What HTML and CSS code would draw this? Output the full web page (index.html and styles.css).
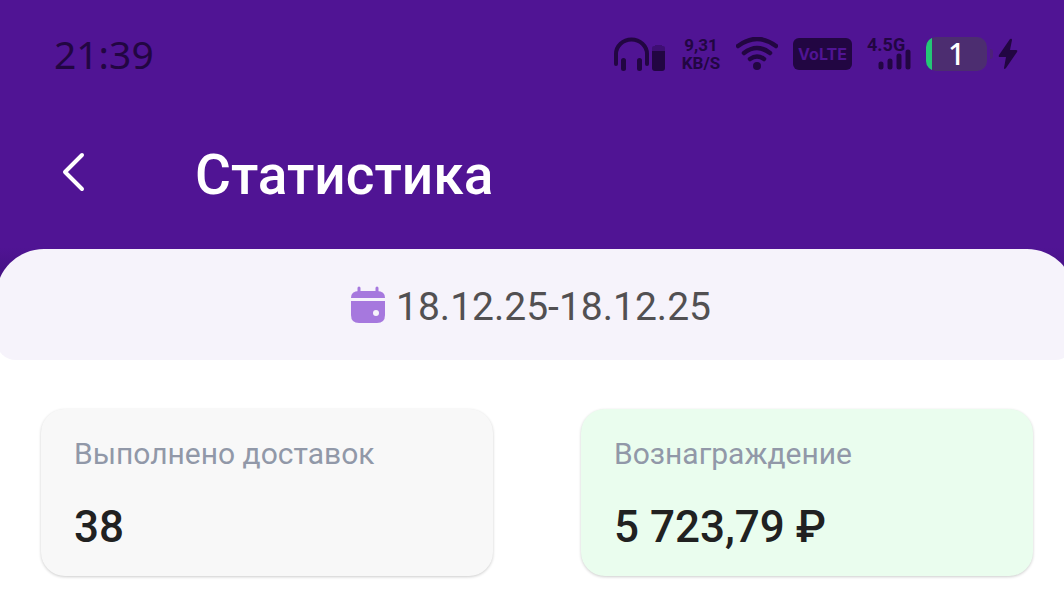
FILE: index.html
```
<!DOCTYPE html>
<html lang="ru">
	<head>
		<meta charset="UTF-8" />
		<meta name="viewport" content="width=device-width, initial-scale=1.0" />
		<title>Статистика</title>
		<link rel="stylesheet" href="styles.css">
	</head>
	<body>
		<header class="header">
			<div class="status-bar">
				<span class="clock">21:39</span>
				<div class="status-icons">
					<svg class="headphones" width="54" height="36" viewBox="0 0 54 36" aria-hidden="true">
						<path d="M4 28V18a15 14 0 0 1 31 0v10" fill="none" stroke="currentColor" stroke-width="4" stroke-linecap="round" />
						<rect x="9" y="22" width="5" height="13" rx="2.5" fill="currentColor" />
						<rect x="25" y="22" width="5" height="13" rx="2.5" fill="currentColor" />
						<path d="M40 15v-3q0-2 2-2h1V9h7v1h1q2 0 2 2v3z" fill="currentColor" opacity=".4" />
						<path d="M40 15h13v17q0 3-3 3h-7q-3 0-3-3z" fill="currentColor" />
					</svg>
					<div class="speed">
						<span>9,31</span>
						<span>KB/S</span>
					</div>
					<svg class="wifi" width="42" height="34" viewBox="0 0 42 34" aria-hidden="true">
						<g fill="none" stroke="currentColor" stroke-width="4.5" stroke-linecap="round">
							<path d="M2 9q19-14 38 0" />
							<path d="M8 16q13-10 26 0" />
							<path d="M14 22q7-5 14 0" />
						</g>
						<circle cx="21" cy="29" r="4" fill="currentColor" />
					</svg>
					<span class="volte">VoLTE</span>
					<div class="signal">
						<span class="network">4.5G</span>
						<svg class="bars" width="33" height="22" viewBox="0 0 33 22" aria-hidden="true">
							<path d="M3 15v3M12 12v6M21 7v11M30 3v15" stroke="currentColor" stroke-width="5" stroke-linecap="round" />
						</svg>
					</div>
					<div class="power">
						<span class="battery">1</span>
						<span class="battery-tip"></span>
						<svg class="bolt" width="20" height="32" viewBox="0 0 20 32" aria-hidden="true">
							<path d="M12 1 1 17q-1 2 1 2h6L6 30q0 2 2 0l11-16q1-2-1-2h-6l2-10q0-2-2-1z" fill="currentColor" />
						</svg>
					</div>
				</div>
			</div>
			<div class="app-bar">
				<button class="back" type="button" aria-label="Назад">
					<svg width="24" height="44" viewBox="0 0 24 44" aria-hidden="true">
						<path d="M21 3 4 20l17 17" fill="none" stroke="currentColor" stroke-width="4" stroke-linecap="round" stroke-linejoin="round" />
					</svg>
				</button>
				<h1 class="title">Статистика</h1>
			</div>
		</header>
		<main>
			<div class="period">
				<button class="period-button" type="button">
					<svg width="36" height="38" viewBox="0 0 36 38" aria-hidden="true">
						<path d="M9 2v5M27 2v5" stroke="currentColor" stroke-width="3" stroke-linecap="round" />
						<path d="M1 12q0-7 8-7h18q8 0 8 7z" fill="currentColor" />
						<path d="M1 15h34v14q0 8-8 8H9q-8 0-8-8z" fill="currentColor" />
						<circle cx="26" cy="27" r="3" fill="#f6f3fb" />
					</svg>
					<span>18.12.25-18.12.25</span>
				</button>
			</div>
			<section class="cards">
				<article class="card">
					<h2 class="card-label">Выполнено доставок</h2>
					<p class="card-value">38</p>
				</article>
				<article class="card card-reward">
					<h2 class="card-label">Вознаграждение</h2>
					<p class="card-value">5 723,79 ₽</p>
				</article>
			</section>
		</main>
	</body>
</html>
```
FILE: styles.css
```
* {
	box-sizing: border-box;
}
body {
	margin: 0;
	background: #fff;
	color: #212121;
	font-family: Roboto, "Noto Sans", sans-serif;
	overflow-x: hidden;
}
h1,
h2,
p {
	margin: 0;
}
button {
	padding: 0;
	border: 0;
	background: none;
	font: inherit;
	cursor: pointer;
}
svg {
	display: block;
}
.header {
	padding-bottom: 57px;
	background: linear-gradient(0deg, #3d0f78, #501494 50px);
}
.status-bar {
	display: flex;
	align-items: center;
	justify-content: space-between;
	height: 108px;
	padding: 0 46px 0 54px;
	color: #220642;
	font-family: "Noto Sans", sans-serif;
}
.clock {
	padding-bottom: 2px;
	font-size: 39px;
}
.status-icons {
	display: flex;
	align-items: center;
	gap: 15px;
	font-weight: 700;
}
.speed {
	display: flex;
	flex-direction: column;
	align-items: center;
	width: 40px;
	font-family: Roboto, sans-serif;
	font-size: 17px;
	line-height: 18px;
}
.volte {
	width: 59px;
	border-radius: 6px;
	background: #220642;
	color: #501494;
	font-family: Inter, sans-serif;
	font-size: 16px;
	line-height: 32px;
	text-align: center;
}
.signal {
	position: relative;
	width: 44px;
	height: 34px;
}
.network {
	display: block;
	font-family: Roboto, sans-serif;
	font-size: 18px;
	line-height: 16px;
}
.bars {
	position: absolute;
	right: 0;
	bottom: 0;
}
.power {
	display: flex;
	align-items: center;
}
.battery {
	width: 61px;
	border-radius: 10px;
	background: linear-gradient(90deg, #24c776 6px, #4c2d70 6px);
	color: #fff;
	font-size: 30px;
	font-weight: 500;
	line-height: 34px;
	text-align: center;
}
.battery-tip {
	width: 3px;
	height: 10px;
	margin: 0 5px 0 3px;
	border-radius: 0 3px 3px 0;
	background: #4c2079;
}
.app-bar {
	display: flex;
	align-items: center;
	height: 132px;
	padding: 0 61px;
	color: #fff;
}
.back {
	margin-right: 110px;
	color: inherit;
}
.title {
	padding-top: 2px;
	font-size: 55px;
	font-weight: 500;
	line-height: 64px;
}
/* the sheet is a little wider than the window, so its corners are cut off */
.period {
	display: flex;
	align-items: center;
	justify-content: center;
	height: 111px;
	margin: -48px -11px 0 -4px;
	padding: 4px 10px 0 0;
	border-radius: 48px 48px 20px 20px;
	background: #f6f3fb;
}
.period-button {
	display: flex;
	align-items: center;
	gap: 10px;
	color: #a678de;
	font-size: 39px;
	line-height: 48px;
}
.period-button svg {
	margin-bottom: 4px;
}
.period-button span {
	color: #525052;
}
.cards {
	display: grid;
	grid-template-columns: 1fr 1fr;
	gap: 88px;
	padding: 49px 31px 36px 41px;
}
.card {
	padding: 27px 33px 21px;
	border-radius: 24px;
	background: #f8f8f8;
	box-shadow: 0 1px 3px rgba(0, 0, 0, 0.2);
}
.card-reward {
	background: #eafdee;
}
.card-label {
	margin-bottom: 27px;
	color: #9198a8;
	font-size: 30px;
	font-weight: 400;
	line-height: 36px;
}
.card-value {
	font-size: 44px;
	font-weight: 500;
	line-height: 56px;
}
```
